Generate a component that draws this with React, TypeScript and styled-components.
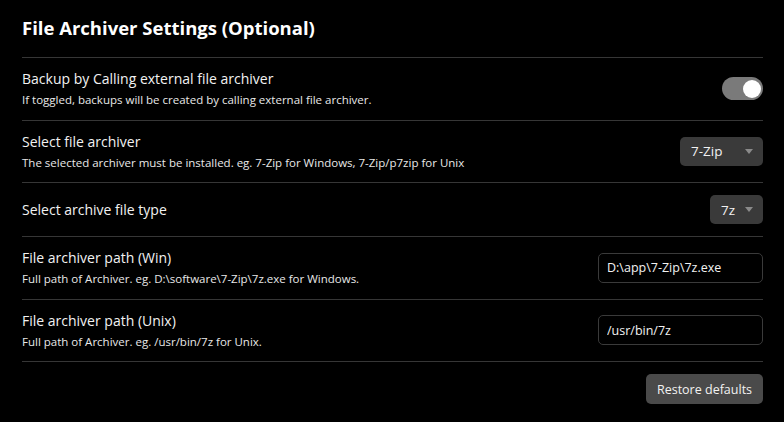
import styled, { createGlobalStyle } from "styled-components";

// Settings page: file archiver section
const GlobalStyle = createGlobalStyle`
  html, body {
    margin: 0;
    padding: 0;
    background-color: #000;
  }
  body {
    font-family: "Open Sans", "Noto Sans", sans-serif;
    color: #eee;
  }
`;

const Page = styled.div`
  width: 784px;
  height: 422px;
  box-sizing: border-box;
  padding: 16px 21px 0 22px;
  background-color: #000;
  overflow: hidden;
`;

const Title = styled.h2`
  margin: 0 0 17px;
  font-size: 18.5px;
  line-height: 24px;
  font-weight: 700;
  color: #fff;
`;

const SettingItem = styled.div`
  display: flex;
  align-items: center;
  justify-content: space-between;
  gap: 16px;
  padding: 12px 0;
  border-top: 1px solid #363636;
`;

const Info = styled.div`
  display: flex;
  flex-direction: column;
`;

const Name = styled.div`
  font-size: 14px;
  line-height: 18px;
  color: #f2f2f2;
`;

const Desc = styled.div`
  padding-top: 4px;
  font-size: 11.5px;
  line-height: 15.5px;
  color: #e8e8e8;
`;

const Toggle = styled.div<{ $on?: boolean }>`
  width: 41px;
  height: 23px;
  box-sizing: border-box;
  padding: 0 2px;
  display: flex;
  align-items: center;
  justify-content: ${(p) => (p.$on ? "flex-end" : "flex-start")};
  border-radius: 12px;
  background-color: #7a7a7a;

  &::after {
    content: "";
    width: 18px;
    height: 18px;
    border-radius: 50%;
    background-color: #fff;
  }
`;

const Dropdown = styled.div<{ $width: number }>`
  width: ${(p) => p.$width}px;
  height: 29px;
  box-sizing: border-box;
  padding: 0 10px 0 11px;
  display: flex;
  align-items: center;
  justify-content: space-between;
  border-radius: 5px;
  background-color: #3a3a3a;
  font-size: 13.5px;
  color: #f2f2f2;

  svg {
    flex-shrink: 0;
  }
`;

const TextInput = styled.input`
  width: 165px;
  height: 30px;
  box-sizing: border-box;
  padding: 0 8px;
  border: 1px solid #3a3a3a;
  border-radius: 5px;
  background-color: #000;
  font-family: inherit;
  font-size: 12.5px;
  color: #f2f2f2;
  outline: none;
`;

const ButtonRow = styled(SettingItem)`
  justify-content: flex-end;
`;

const Button = styled.button`
  width: 117px;
  height: 30px;
  padding: 0;
  border: none;
  border-radius: 5px;
  background-color: #4a4a4a;
  font-family: inherit;
  font-size: 12.5px;
  color: #f2f2f2;
  cursor: pointer;
`;

const Caret = () => (
  <svg width="8" height="5" viewBox="0 0 8 5">
    <path d="M0 0 L8 0 L4 5 Z" fill="#8a8a8a" />
  </svg>
);

const App = () => {
  return (
    <>
      <GlobalStyle />
      <Page>
        <Title>File Archiver Settings (Optional)</Title>

        <SettingItem>
          <Info>
            <Name>Backup by Calling external file archiver</Name>
            <Desc>If toggled, backups will be created by calling external file archiver.</Desc>
          </Info>
          <Toggle $on />
        </SettingItem>

        <SettingItem>
          <Info>
            <Name>Select file archiver</Name>
            <Desc>The selected archiver must be installed. eg. 7-Zip for Windows, 7-Zip/p7zip for Unix</Desc>
          </Info>
          <Dropdown $width={83}>
            <span>7-Zip</span>
            <Caret />
          </Dropdown>
        </SettingItem>

        <SettingItem>
          <Info>
            <Name>Select archive file type</Name>
          </Info>
          <Dropdown $width={53}>
            <span>7z</span>
            <Caret />
          </Dropdown>
        </SettingItem>

        <SettingItem>
          <Info>
            <Name>File archiver path (Win)</Name>
            <Desc>Full path of Archiver. eg. D:\software\7-Zip\7z.exe for Windows.</Desc>
          </Info>
          <TextInput defaultValue="D:\app\7-Zip\7z.exe" />
        </SettingItem>

        <SettingItem>
          <Info>
            <Name>File archiver path (Unix)</Name>
            <Desc>Full path of Archiver. eg. /usr/bin/7z for Unix.</Desc>
          </Info>
          <TextInput defaultValue="/usr/bin/7z" />
        </SettingItem>

        <ButtonRow>
          <Button>Restore defaults</Button>
        </ButtonRow>
      </Page>
    </>
  );
};

export default App;
